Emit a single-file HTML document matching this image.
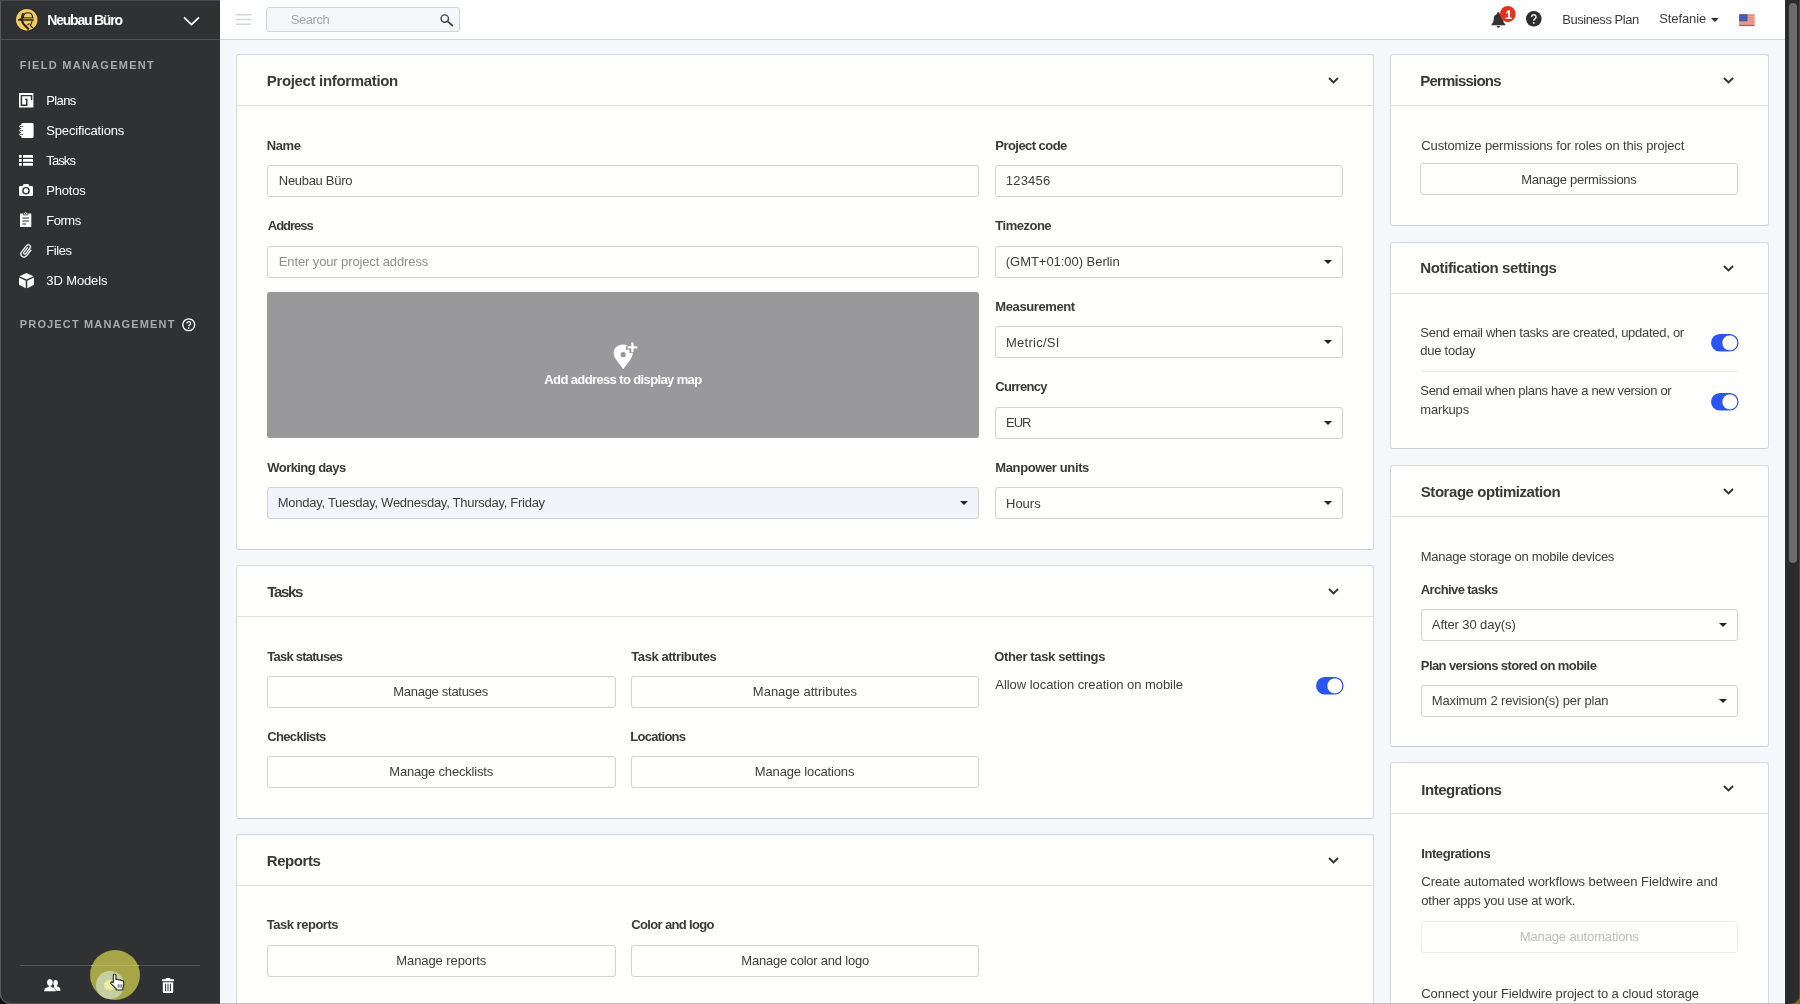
<!DOCTYPE html>
<html lang="en">
<head>
<meta charset="utf-8">
<title>Project settings</title>
<style>
*{box-sizing:border-box;margin:0;padding:0}
html,body{width:1800px;height:1004px;overflow:hidden;background:#f6f7fa}
body{font-family:"Liberation Sans",sans-serif;font-size:13px;color:#333;position:relative}
.x{position:absolute;white-space:pre;line-height:16px;font-size:13px}
svg{position:absolute;overflow:visible}
#sb{position:absolute;left:0;top:0;width:220px;height:1004px;background:#303133;border-left:1px solid #58595c;border-top:1px solid #48494b}
#sbh{position:absolute;left:0;top:-1px;width:219px;height:40px;border-bottom:1px solid #505154}
#tb{position:absolute;left:220px;top:0;width:1565px;height:40px;background:#fefefe;border-bottom:1px solid #d3d4d5}
#srch{position:absolute;left:266px;top:7px;width:194px;height:25px;background:#f5f6f9;border:1px solid #d0d3d8;border-radius:3px}
#scr{position:absolute;left:1785px;top:0;width:15px;height:1004px;background:#2b2b2b;border-right:1px solid #474747}
#scr i{position:absolute;left:4px;top:3px;width:8px;height:560px;border-radius:4px;background:#6b6b6b}
.card{position:absolute;background:#fefefd;border:1px solid #d7d8da;border-bottom-color:#cdcecf;border-radius:3px}
.hl{position:absolute;height:1px;background:#dedfe1}
.inp{position:absolute;height:32px;border:1px solid #d0d2d5;border-radius:3px;background:#fefefd}
.inp.sel:after{content:"";position:absolute;right:10px;top:13px;border-left:4px solid transparent;border-right:4px solid transparent;border-top:4.5px solid #222}
.inp.dis{border-color:#ecedef}
</style>
</head>
<body>
<!-- SIDEBAR -->
<div id="sb"><div id="sbh"></div></div>

<svg style="left:15.600px;top:9.400px" width="21.500" height="21.500" viewBox="0 0 21.500 21.500">
<circle cx="10.750" cy="10.750" r="10.750" fill="#f2cc5e"/>
<g fill="none" stroke="#2b2516" stroke-linecap="round" stroke-linejoin="round">
<path d="M7.400 8.600C7.400 5.600 9.400 3.700 12 3.700s4.500 1.900 4.600 4.900" stroke-width="1.100"/>
<path d="M6.900 4.900C6.100 6.400 5.800 8.200 5.900 10" stroke-width="2"/>
<path d="M7.400 8.900h9.800" stroke-width="1"/>
<path d="M2.600 10.900L6 9.400M2.600 10.900h14.600" stroke-width="1.500"/>
<path d="M5.900 11.200c.4 2.600 1.700 4.400 3.400 5.600l2.900 3" stroke-width="2.200"/>
<path d="M16 12.300c-.2 1.700-.9 2.900-1.900 3.900l2.700 2.800" stroke-width="1.100"/>
<path d="M11.900 15.500l1.300-.7" stroke-width="1.200"/>
</g>
</svg>
<svg style="left:182.500px;top:16px" width="17" height="10" viewBox="0 0 17 10"><path d="M1 1.300L8.500 8.600L16 1.300" fill="none" stroke="#fff" stroke-width="1.700"/></svg>
<!-- plans -->
<svg style="left:19.100px;top:93.100px" width="14.400" height="14.600" viewBox="0 0 14.400 14.600"><rect width="14.400" height="14.600" rx=".6" fill="#fff"/><path d="M12.600 6.900V2.600H2.400v9.700h5.400V6.400H6.100" fill="none" stroke="#303133" stroke-width="1.450"/></svg>
<!-- specs -->
<svg style="left:19px;top:122.800px" width="14.600" height="15.100" viewBox="0 0 14.600 15.100"><rect x="2.300" y="0" width="12.300" height="15.100" rx="1.400" fill="#fff"/><g fill="none" stroke="#fff" stroke-width="1"><ellipse cx="2.200" cy="3.600" rx="1.700" ry="1.100"/><ellipse cx="2.200" cy="7.600" rx="1.700" ry="1.100"/><ellipse cx="2.200" cy="11.400" rx="1.700" ry="1.100"/></g><path d="M2.600 3.600h1.500M2.600 7.600h1.500M2.600 11.400h1.500" stroke="#303133" stroke-width=".9"/></svg>
<!-- tasks -->
<svg style="left:19.400px;top:155.100px" width="14" height="10.800" viewBox="0 0 14 10.800"><path d="M0 0h2.700v2.700H0zM4 0h10v2.700H4zM0 4.050h2.700v2.700H0zM4 4.050h10v2.700H4zM0 8.100h2.700v2.700H0zM4 8.100h10v2.700H4z" fill="#fff"/></svg>
<!-- photos -->
<svg style="left:19.400px;top:184.300px" width="14" height="12" viewBox="0 0 16 13.700"><path d="M5.300 0h5.400l1.300 2.200h2.500A1.500 1.500 0 0 1 16 3.700v8.500a1.500 1.500 0 0 1-1.500 1.500h-13A1.500 1.500 0 0 1 0 12.200V3.700a1.500 1.500 0 0 1 1.500-1.500H4z" fill="#fff"/><circle cx="8" cy="7.700" r="3.550" fill="none" stroke="#303133" stroke-width="1.600"/></svg>
<!-- forms -->
<svg style="left:20.300px;top:212.100px" width="11.300" height="15.100" viewBox="0 0 11.300 15.100"><path d="M.6 1.500h10.100a.6.600 0 0 1 .6.600v12.400a.6.600 0 0 1-.6.600H.6a.6.600 0 0 1-.6-.6V2.100a.6.600 0 0 1 .6-.6z" fill="#fff"/><path d="M3.400 2.900V1.800A2.250 1.800 0 0 1 7.900 1.800V2.900z" fill="#fff" stroke="#303133" stroke-width=".8"/><circle cx="5.650" cy="1.500" r=".6" fill="#303133"/><path d="M2.300 6h6.700M2.300 9h6.700M2.300 12h3.800" stroke="#303133" stroke-width="1.100"/></svg>
<!-- files -->
<svg style="left:20px;top:243.800px" width="12.400" height="14.200" viewBox="0 0 12.400 14.200"><g transform="translate(6.200 7.100) rotate(38) scale(.66) translate(-12.500 -12)"><path d="M16.500 6v11.500c0 2.210-1.790 4-4 4s-4-1.790-4-4V5c0-1.380 1.120-2.500 2.500-2.500s2.500 1.120 2.500 2.500v10.500c0 .55-.45 1-1 1s-1-.45-1-1V6H10v9.500c0 1.380 1.120 2.500 2.500 2.500s2.500-1.120 2.500-2.500V5c0-2.210-1.790-4-4-4S7 2.790 7 5v12.500c0 3.040 2.460 5.500 5.500 5.500s5.500-2.460 5.500-5.500V6h-1.500z" fill="#fff" stroke="#fff" stroke-width=".5"/></g></svg>
<!-- 3d -->
<svg style="left:18.800px;top:272.800px" width="15" height="15.200" viewBox="0 0 16 16.200"><path d="M8 0l7.500 3.500L8 7 .5 3.500z" fill="#fff"/><path d="M0 4.800l7.200 3.400v8L0 12.600z" fill="#fff"/><path d="M16 4.800L8.800 8.200v8l7.200-3.600z" fill="#fff"/></svg>
<!-- help -->
<svg style="left:182px;top:317.500px" width="13.500" height="13.500" viewBox="0 0 15 15"><circle cx="7.500" cy="7.500" r="6.600" fill="none" stroke="#fff" stroke-width="1.500"/><path d="M5.500 6a2 2 0 1 1 2.900 1.800c-.7.400-.9.700-.9 1.500" fill="none" stroke="#fff" stroke-width="1.500"/><circle cx="7.500" cy="11.200" r="1" fill="#fff"/></svg>
<!-- bottom -->
<div style="position:absolute;left:20px;top:965px;width:180px;height:1px;background:#55565a"></div>
<svg style="left:43.800px;top:978.600px" width="16.400" height="12.600" viewBox="0 0 16.400 12.600"><ellipse cx="11.600" cy="3.900" rx="2.300" ry="2.900" fill="#fff"/><path d="M10.600 6h2v1.300c1.900.6 3.800 1.300 3.800 3.100v1.300H8.500z" fill="#fff"/><ellipse cx="5.900" cy="3.500" rx="2.900" ry="3.500" fill="#fff" stroke="#303133" stroke-width=".7"/><path d="M4.600 6.300h2.600v1.500c2.400.7 4.600 1.500 4.600 3.500v1.300H0v-1.300c0-2 2.200-2.800 4.600-3.500z" fill="#fff" stroke="#303133" stroke-width=".5"/><ellipse cx="5.900" cy="3.500" rx="2.600" ry="3.200" fill="#fff"/></svg>
<svg style="left:162px;top:977.500px" width="12" height="15" viewBox="0 0 12 15"><path d="M3.700 0h4.600v1.300H12v1.900H0V1.300h3.700z" fill="#fff"/><path d="M.8 4.200h10.400v9.500A1.300 1.300 0 0 1 9.900 15H2.100A1.300 1.300 0 0 1 .8 13.700z" fill="#fff"/><path d="M3.600 5.800v7.400M6 5.800v7.400M8.400 5.800v7.400" stroke="#303133" stroke-width="1"/></svg>

<!-- TOPBAR -->
<div id="tb"></div>
<div id="srch"></div>

<svg style="left:236px;top:13.500px" width="15" height="11" viewBox="0 0 15 11"><path d="M0 .7h15M0 5.500h15M0 10.300h15" stroke="#d3d6da" stroke-width="1.400"/></svg>
<svg style="left:439.500px;top:13.700px" width="13.300" height="12.300" viewBox="0 0 14 13"><circle cx="5" cy="4.800" r="3.900" fill="none" stroke="#444" stroke-width="1.500"/><path d="M7.800 7.600l5.200 4.600" stroke="#444" stroke-width="1.900" stroke-linecap="round"/></svg>
<!-- bell -->
<svg style="left:1490.600px;top:11.600px" width="14.800" height="16.400" viewBox="0 0 15 16"><path d="M7.500 0c.8 0 1.300.5 1.300 1.200v.5c2.300.6 3.500 2.500 3.500 5 0 2.800.7 4 2.200 5.300v1H.5v-1C2 10.700 2.700 9.500 2.700 6.700c0-2.500 1.200-4.400 3.500-5v-.5C6.200.5 6.700 0 7.500 0z" fill="#333"/><path d="M5.800 14h3.400c0 1-.8 1.700-1.700 1.700S5.800 15 5.800 14z" fill="#333"/></svg>
<svg style="left:1500px;top:5.600px" width="15.600" height="16.200" viewBox="0 0 15.600 16.200"><ellipse cx="7.800" cy="8.100" rx="7.800" ry="8.100" fill="#e8301f"/></svg>
<svg style="left:1505px;top:9.600px" width="6.700" height="9.100" viewBox="0 0 6.700 9.100"><path d="M1 2.300L3.500 0H5.100V7.500H6.700V9.100H.6V7.500H2.900V2.700L1.700 3.700z" fill="#fdeeea"/></svg>
<!-- help -->
<svg style="left:1526px;top:11px" width="15.600" height="15.600" viewBox="0 0 16 16"><circle cx="8" cy="8" r="8" fill="#2e2e2e"/><path d="M5.700 6.200a2.300 2.300 0 1 1 3.400 2c-.8.500-1.100.8-1.100 1.700" fill="none" stroke="#eceef4" stroke-width="1.500"/><circle cx="8" cy="12.200" r="1" fill="#eceef4"/></svg>
<!-- caret -->
<svg style="left:1711px;top:18.300px" width="7.800" height="4" viewBox="0 0 7.800 4"><path d="M0 0h7.800L3.900 4z" fill="#333"/></svg>
<!-- flag -->
<svg style="left:1739.200px;top:14.400px" width="15.600" height="12.200" viewBox="0 0 15.600 12.200"><rect width="15.600" height="12.200" rx=".8" fill="#f4ab90"/><path d="M0 1.400h15.600M0 3.300h15.600M0 5.200h15.600M0 7.100h15.600M0 9h15.600" stroke="#dd7a78" stroke-width=".8"/><rect x=".2" y=".2" width="8.300" height="7.100" fill="#4457a8"/><path d="M1.300 2.400h6M1.300 4.900h6" stroke="#3b6be8" stroke-width="1" stroke-dasharray="1.200 .8"/><path d="M.3 11.300h15" stroke="#a9596c" stroke-width="1.300"/></svg>

<!-- MAIN CARDS -->
<div class="card" style="left:236px;top:54px;width:1138px;height:496px"></div>
<div class="hl" style="left:237px;top:105px;width:1136px"></div>
<div class="card" style="left:236px;top:565px;width:1138px;height:254px"></div>
<div class="hl" style="left:237px;top:616px;width:1136px"></div>
<div class="card" style="left:236px;top:834px;width:1138px;height:200px"></div>
<div class="hl" style="left:237px;top:885px;width:1136px"></div>
<!-- RIGHT CARDS -->
<div class="card" style="left:1390px;top:54px;width:379px;height:172px"></div>
<div class="hl" style="left:1391px;top:105px;width:377px"></div>
<div class="card" style="left:1390px;top:242px;width:379px;height:207px"></div>
<div class="hl" style="left:1391px;top:293px;width:377px"></div>
<div class="card" style="left:1390px;top:465px;width:379px;height:282px"></div>
<div class="hl" style="left:1391px;top:516px;width:377px"></div>
<div class="card" style="left:1390px;top:762px;width:379px;height:300px"></div>
<div class="hl" style="left:1391px;top:813px;width:377px"></div>
<!-- chevrons -->
<svg style="left:1327.5px;top:76.5px" width="11" height="7" viewBox="0 0 11 7"><path d="M1 1l4.500 4.500L10 1" fill="none" stroke="#333" stroke-width="1.900"/></svg>
<svg style="left:1327.5px;top:587.5px" width="11" height="7" viewBox="0 0 11 7"><path d="M1 1l4.500 4.500L10 1" fill="none" stroke="#333" stroke-width="1.900"/></svg>
<svg style="left:1327.5px;top:856.5px" width="11" height="7" viewBox="0 0 11 7"><path d="M1 1l4.500 4.500L10 1" fill="none" stroke="#333" stroke-width="1.900"/></svg>
<svg style="left:1722.5px;top:76.5px" width="11" height="7" viewBox="0 0 11 7"><path d="M1 1l4.500 4.500L10 1" fill="none" stroke="#333" stroke-width="1.900"/></svg>
<svg style="left:1722.5px;top:264.5px" width="11" height="7" viewBox="0 0 11 7"><path d="M1 1l4.500 4.500L10 1" fill="none" stroke="#333" stroke-width="1.900"/></svg>
<svg style="left:1722.5px;top:488px" width="11" height="7" viewBox="0 0 11 7"><path d="M1 1l4.500 4.500L10 1" fill="none" stroke="#333" stroke-width="1.900"/></svg>
<svg style="left:1722.5px;top:785px" width="11" height="7" viewBox="0 0 11 7"><path d="M1 1l4.500 4.500L10 1" fill="none" stroke="#333" stroke-width="1.900"/></svg>
<!-- inputs card 1 -->
<div class="inp" style="left:267px;top:165px;width:712px"></div>
<div class="inp" style="left:267px;top:245.500px;width:712px"></div>
<div class="inp" style="left:995px;top:165px;width:348px"></div>
<div class="inp sel" style="left:995px;top:245.500px;width:348px"></div>
<div class="inp sel" style="left:995px;top:326px;width:348px"></div>
<div class="inp sel" style="left:995px;top:406.500px;width:348px"></div>
<div class="inp sel" style="left:995px;top:487px;width:348px"></div>
<div class="inp sel" style="left:267px;top:487px;width:712px;background:#f2f4fa"></div>
<div id="map" style="position:absolute;left:267px;top:292px;width:712px;height:146px;border-radius:3px;background:#99999b"></div>
<svg id="pin" style="left:613px;top:342px" width="25" height="28" viewBox="0 0 25 28"><path d="M9.800 2.600c2-.1 3.600.5 4.800 1.500l-1.700.1v3.500h3.500v3.300h3.300c.1 2.400-1 4.700-2.700 7l-6.800 9.300-6.800-9.300C1.700 15.700.600 13.500.600 11.300c0-4.800 4.100-8.700 9.200-8.700z" fill="#fff"/><circle cx="10.200" cy="12.700" r="2.600" fill="#99999b"/><path d="M18.300.4h2.200v3.800h3.800v2.200h-3.800v3.800h-2.200V6.400h-3.800V4.200h3.800z" fill="#fff"/></svg>
<!-- task buttons -->
<div class="inp" style="left:267px;top:675.500px;width:349px"></div>
<div class="inp" style="left:631px;top:675.500px;width:348px"></div>
<div class="inp" style="left:267px;top:756px;width:349px"></div>
<div class="inp" style="left:631px;top:756px;width:348px"></div>
<svg style="left:1316.3px;top:677.2px" width="27.600" height="17.600" viewBox="0 0 27.600 17.600"><rect width="27.600" height="17.600" rx="8.800" fill="#2b55f0"/><circle cx="18.800" cy="8.800" r="7.650" fill="#fefefe" stroke="rgba(20,30,90,.35)" stroke-width=".5"/></svg>
<!-- reports buttons -->
<div class="inp" style="left:267px;top:944.500px;width:349px"></div>
<div class="inp" style="left:631px;top:944.500px;width:348px"></div>
<!-- right col widgets -->
<div class="inp" style="left:1420px;top:163px;width:318px"></div>
<svg style="left:1710.7px;top:334.2px" width="27.600" height="17.600" viewBox="0 0 27.600 17.600"><rect width="27.600" height="17.600" rx="8.800" fill="#2b55f0"/><circle cx="18.800" cy="8.800" r="7.650" fill="#fefefe" stroke="rgba(20,30,90,.35)" stroke-width=".5"/></svg>
<div class="hl" style="left:1420.500px;top:371px;width:317.500px;background:#ebecee"></div>
<svg style="left:1710.7px;top:392.7px" width="27.600" height="17.600" viewBox="0 0 27.600 17.600"><rect width="27.600" height="17.600" rx="8.800" fill="#2b55f0"/><circle cx="18.800" cy="8.800" r="7.650" fill="#fefefe" stroke="rgba(20,30,90,.35)" stroke-width=".5"/></svg>
<div class="inp sel" style="left:1420.500px;top:609px;width:317.500px"></div>
<div class="inp sel" style="left:1420.500px;top:684.500px;width:317.500px"></div>
<div class="inp dis" style="left:1420.500px;top:921px;width:317.500px"></div>
<div id="tx" style="position:absolute;left:0;top:0;width:1800px;height:1004px;will-change:transform">
<span class="x" style="left:47.3px;top:12.0px;font-size:14px;font-weight:bold;letter-spacing:-1.22px;color:#fff">Neubau Büro</span>
<span class="x" style="left:19.8px;top:57.0px;font-size:11px;font-weight:bold;letter-spacing:1.27px;color:#a9aaac">FIELD MANAGEMENT</span>
<span class="x" style="left:46.3px;top:93.0px;letter-spacing:-0.65px;color:#fff">Plans</span>
<span class="x" style="left:46.3px;top:123.0px;letter-spacing:-0.17px;color:#fff">Specifications</span>
<span class="x" style="left:46.3px;top:153.0px;letter-spacing:-0.90px;color:#fff">Tasks</span>
<span class="x" style="left:46.3px;top:183.0px;letter-spacing:-0.20px;color:#fff">Photos</span>
<span class="x" style="left:46.3px;top:213.0px;letter-spacing:-0.50px;color:#fff">Forms</span>
<span class="x" style="left:46.3px;top:243.0px;letter-spacing:-0.45px;color:#fff">Files</span>
<span class="x" style="left:46.3px;top:273.0px;letter-spacing:-0.12px;color:#fff">3D Models</span>
<span class="x" style="left:19.8px;top:316.0px;font-size:11px;font-weight:bold;letter-spacing:1.15px;color:#a9aaac">PROJECT MANAGEMENT</span>
<span class="x" style="left:290.8px;top:12.0px;letter-spacing:-0.44px;color:#a4a6a9">Search</span>
<span class="x" style="left:1562.3px;top:12.0px;letter-spacing:-0.45px;color:#3e3e3e">Business Plan</span>
<span class="x" style="left:1659.3px;top:11.0px;letter-spacing:-0.11px;color:#3e3e3e">Stefanie</span>
<span class="x" style="left:266.8px;top:73.0px;font-size:15px;font-weight:bold;letter-spacing:-0.34px;color:#3a3a3a">Project information</span>
<span class="x" style="left:266.8px;top:138.0px;font-weight:bold;letter-spacing:-0.40px;color:#3a3a3a">Name</span>
<span class="x" style="left:278.8px;top:173.0px;letter-spacing:-0.30px;color:#3e3e3e">Neubau Büro</span>
<span class="x" style="left:267.8px;top:218.0px;font-weight:bold;letter-spacing:-1.03px;color:#3a3a3a">Address</span>
<span class="x" style="left:278.8px;top:254.0px;letter-spacing:-0.12px;color:#909090">Enter your project address</span>
<span class="x" style="left:995.3px;top:138.0px;font-weight:bold;letter-spacing:-0.55px;color:#3a3a3a">Project code</span>
<span class="x" style="left:1005.8px;top:173.0px;letter-spacing:0.20px;color:#3e3e3e">123456</span>
<span class="x" style="left:995.3px;top:218.0px;font-weight:bold;letter-spacing:-0.49px;color:#3a3a3a">Timezone</span>
<span class="x" style="left:1005.8px;top:254.0px;letter-spacing:-0.04px;color:#3e3e3e">(GMT+01:00) Berlin</span>
<span class="x" style="left:995.3px;top:299.0px;font-weight:bold;letter-spacing:-0.40px;color:#3a3a3a">Measurement</span>
<span class="x" style="left:1006.0px;top:335.0px;letter-spacing:0.25px;color:#3e3e3e">Metric/SI</span>
<span class="x" style="left:995.3px;top:379.0px;font-weight:bold;letter-spacing:-0.71px;color:#3a3a3a">Currency</span>
<span class="x" style="left:1006.0px;top:415.0px;letter-spacing:-1.00px;color:#3e3e3e">EUR</span>
<span class="x" style="left:995.3px;top:460.0px;font-weight:bold;letter-spacing:-0.38px;color:#3a3a3a">Manpower units</span>
<span class="x" style="left:1006.0px;top:496.0px;letter-spacing:0.00px;color:#3e3e3e">Hours</span>
<span class="x" style="left:267.3px;top:460.0px;font-weight:bold;letter-spacing:-0.56px;color:#3a3a3a">Working days</span>
<span class="x" style="left:277.8px;top:495.0px;letter-spacing:-0.27px;color:#3e3e3e">Monday, Tuesday, Wednesday, Thursday, Friday</span>
<span class="x" style="left:544.3px;top:372.0px;font-weight:bold;letter-spacing:-0.62px;color:#fff">Add address to display map</span>
<span class="x" style="left:267.3px;top:584.0px;font-size:15px;font-weight:bold;letter-spacing:-1.35px;color:#3a3a3a">Tasks</span>
<span class="x" style="left:267.3px;top:649.0px;font-weight:bold;letter-spacing:-0.77px;color:#3a3a3a">Task statuses</span>
<span class="x" style="left:393.3px;top:684.0px;letter-spacing:-0.29px;color:#3e3e3e">Manage statuses</span>
<span class="x" style="left:631.3px;top:649.0px;font-weight:bold;letter-spacing:-0.43px;color:#3a3a3a">Task attributes</span>
<span class="x" style="left:752.8px;top:684.0px;letter-spacing:0.01px;color:#3e3e3e">Manage attributes</span>
<span class="x" style="left:267.3px;top:729.0px;font-weight:bold;letter-spacing:-0.67px;color:#3a3a3a">Checklists</span>
<span class="x" style="left:389.3px;top:764.0px;letter-spacing:-0.19px;color:#3e3e3e">Manage checklists</span>
<span class="x" style="left:630.3px;top:729.0px;font-weight:bold;letter-spacing:-0.70px;color:#3a3a3a">Locations</span>
<span class="x" style="left:754.8px;top:764.0px;letter-spacing:-0.15px;color:#3e3e3e">Manage locations</span>
<span class="x" style="left:994.3px;top:649.0px;font-weight:bold;letter-spacing:-0.37px;color:#3a3a3a">Other task settings</span>
<span class="x" style="left:995.3px;top:677.0px;letter-spacing:-0.05px;color:#3e3e3e">Allow location creation on mobile</span>
<span class="x" style="left:266.8px;top:853.0px;font-size:15px;font-weight:bold;letter-spacing:-0.43px;color:#3a3a3a">Reports</span>
<span class="x" style="left:266.8px;top:917.0px;font-weight:bold;letter-spacing:-0.49px;color:#3a3a3a">Task reports</span>
<span class="x" style="left:396.3px;top:953.0px;letter-spacing:-0.09px;color:#3e3e3e">Manage reports</span>
<span class="x" style="left:631.3px;top:917.0px;font-weight:bold;letter-spacing:-0.66px;color:#3a3a3a">Color and logo</span>
<span class="x" style="left:741.3px;top:953.0px;letter-spacing:-0.22px;color:#3e3e3e">Manage color and logo</span>
<span class="x" style="left:1420.3px;top:73.0px;font-size:15px;font-weight:bold;letter-spacing:-0.80px;color:#3a3a3a">Permissions</span>
<span class="x" style="left:1421.3px;top:138.0px;letter-spacing:-0.14px;color:#3e3e3e">Customize permissions for roles on this project</span>
<span class="x" style="left:1521.3px;top:172.0px;letter-spacing:-0.26px;color:#3e3e3e">Manage permissions</span>
<span class="x" style="left:1420.3px;top:260.0px;font-size:15px;font-weight:bold;letter-spacing:-0.38px;color:#3a3a3a">Notification settings</span>
<span class="x" style="left:1420.3px;top:325.0px;letter-spacing:-0.27px;color:#3e3e3e">Send email when tasks are created, updated, or</span>
<span class="x" style="left:1420.3px;top:343.0px;letter-spacing:-0.25px;color:#3e3e3e">due today</span>
<span class="x" style="left:1420.3px;top:383.0px;letter-spacing:-0.33px;color:#3e3e3e">Send email when plans have a new version or</span>
<span class="x" style="left:1420.3px;top:402.0px;letter-spacing:-0.17px;color:#3e3e3e">markups</span>
<span class="x" style="left:1420.8px;top:484.0px;font-size:15px;font-weight:bold;letter-spacing:-0.45px;color:#3a3a3a">Storage optimization</span>
<span class="x" style="left:1420.8px;top:549.0px;letter-spacing:-0.26px;color:#3e3e3e">Manage storage on mobile devices</span>
<span class="x" style="left:1420.8px;top:582.0px;font-weight:bold;letter-spacing:-0.60px;color:#3a3a3a">Archive tasks</span>
<span class="x" style="left:1431.8px;top:617.0px;letter-spacing:-0.09px;color:#3e3e3e">After 30 day(s)</span>
<span class="x" style="left:1420.8px;top:658.0px;font-weight:bold;letter-spacing:-0.58px;color:#3a3a3a">Plan versions stored on mobile</span>
<span class="x" style="left:1431.8px;top:693.0px;letter-spacing:-0.16px;color:#3e3e3e">Maximum 2 revision(s) per plan</span>
<span class="x" style="left:1421.3px;top:782.0px;font-size:15px;font-weight:bold;letter-spacing:-0.47px;color:#3a3a3a">Integrations</span>
<span class="x" style="left:1421.3px;top:846.0px;font-weight:bold;letter-spacing:-0.44px;color:#3a3a3a">Integrations</span>
<span class="x" style="left:1421.3px;top:874.0px;letter-spacing:-0.04px;color:#3e3e3e">Create automated workflows between Fieldwire and</span>
<span class="x" style="left:1421.3px;top:893.0px;letter-spacing:-0.22px;color:#3e3e3e">other apps you use at work.</span>
<span class="x" style="left:1519.8px;top:929.0px;letter-spacing:-0.14px;color:#bcbdbf">Manage automations</span>
<span class="x" style="left:1421.3px;top:986.0px;letter-spacing:-0.10px;color:#3e3e3e">Connect your Fieldwire project to a cloud storage</span>
</div>
<!-- cursor highlight -->

<div style="position:absolute;left:90px;top:950px;width:50px;height:50px;border-radius:50%;background:#a6a548"></div>
<div style="position:absolute;left:91px;top:965px;width:48px;height:1px;background:#b4b35a"></div>
<div style="position:absolute;left:96px;top:971px;width:27.500px;height:28px;border-radius:50%;background:#c4d0a1"></div>
<svg style="left:102.500px;top:978.500px" width="13" height="13" viewBox="0 0 12 12"><path d="M6 0l1.100 1.600 1.900-.4.300 1.900 1.900.8-.8 1.800.8 1.800-1.900.8-.3 1.900-1.900-.4L6 11.400l-1.100-1.600-1.900.4-.3-1.900-1.900-.8.800-1.800-.8-1.800 1.900-.8.300-1.900 1.900.4z" fill="#efefa0"/></svg>
<svg style="left:110px;top:973px" width="16" height="18" viewBox="0 0 16 18"><path d="M3.300 9.800V2.300a1.300 1.300 0 0 1 2.600 0V6.600c.5-.6 2.400-.5 2.800.5.600-.5 2.300-.3 2.700.7.700-.4 2.200 0 2.300 1 .3 2 .2 4.200-.7 5.700L12.700 17H6.400L6 15.500C4.500 14 2.500 12.200 1 10.700.2 9.800 1.200 8.500 2.200 9z" fill="#fff" stroke="#222" stroke-width="1.100" stroke-linejoin="round"/><path d="M8.200 11.300v3.300M10 11.300v3.300M11.800 11.300v3.300" stroke="#333" stroke-width=".8"/></svg>
<!-- window edges / corners -->
<div style="position:absolute;left:0;top:1002.500px;width:1785px;height:1.500px;background:rgba(120,120,124,.45)"></div>
<svg style="left:0;top:994px" width="10" height="10" viewBox="0 0 10 10"><path d="M0 0v10h10A10 10 0 0 1 0 0z" fill="#0b0f11"/><path d="M.5 0A9.500 9.500 0 0 0 10 9.500" fill="none" stroke="#6a6b6e" stroke-width="1"/></svg>

<div id="scr"><i></i></div>
<svg style="left:1790px;top:994px" width="10" height="10" viewBox="0 0 10 10"><path d="M10 0v10H0A10 10 0 0 0 10 0z" fill="#6f6d22"/></svg>
</body>
</html>
